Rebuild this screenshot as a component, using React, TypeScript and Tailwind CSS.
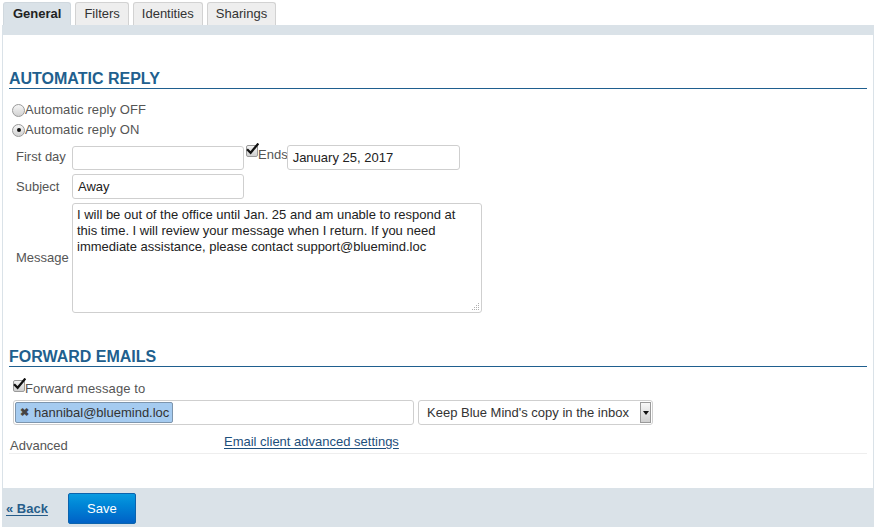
const tabs = ["General", "Filters", "Identities", "Sharings"];

function CheckBox() {
  return (
    <span className="relative inline-block h-[12px] w-[12px] shrink-0">
      <span className="absolute inset-0 rounded-[2px] border border-[#9a9a9a] bg-gradient-to-b from-[#f4f4f4] to-[#cfcfcf]" />
      <svg className="absolute left-[0px] top-[-2px]" width="13" height="13" viewBox="0 0 14 14">
        <path d="M2 7.5 L5 10.5 L12.5 1.5" fill="none" stroke="#111" strokeWidth="2.4" strokeLinecap="square" />
      </svg>
    </span>
  );
}

function Radio({ on }: { on?: boolean }) {
  return (
    <span className="flex h-[13px] w-[13px] shrink-0 items-center justify-center rounded-full border border-[#9a9a9a] bg-gradient-to-b from-[#f6f6f6] to-[#d2d2d2]">
      {on && <span className="h-[4px] w-[4px] rounded-full bg-[#111]" />}
    </span>
  );
}

function Field({ value, className }: { value?: string; className: string }) {
  return (
    <div className={`flex items-center rounded-[3px] border border-[#cfcfcf] bg-white px-[5px] text-[13px] text-[#222] ${className}`}>
      {value}
    </div>
  );
}

export default function App() {
  return (
    <div className="flex h-[527px] w-[874px] flex-col bg-white text-[13px] text-[#555]" style={{ fontFamily: '"Liberation Sans", Arial, sans-serif' }}>
      <div className="flex h-[25px] items-end gap-[4px] pl-[3px]">
        {tabs.map((t, i) => (
          <div
            key={t}
            className={
              i === 0
                ? "flex h-[23px] items-center rounded-t-[3px] border border-b-0 border-[#d0d8de] bg-[#dae2e8] px-[9px] font-bold text-[#222]"
                : "flex h-[23px] items-center rounded-t-[3px] border border-b-0 border-[#d2d2d2] bg-[#eeeeee] px-[8px] text-[#333]"
            }
          >
            {t}
          </div>
        ))}
      </div>
      <div className="ml-[2px] h-[10px] bg-[#dae2e8]" />
      <div className="ml-[2px] flex flex-1 flex-col border-x border-[#dae2e8] pl-[6px] pr-[6px]">
        <h2 className="mt-[35px] border-b border-[#1f5f8f] text-[16px] font-bold leading-[18px] text-[#215f8e]">AUTOMATIC REPLY</h2>
        <div className="mt-[11px] flex h-[20px] items-center pl-[3px]">
          <Radio />
          <span className="tracking-[0.1px]">Automatic reply OFF</span>
        </div>
        <div className="flex h-[20px] items-center pl-[3px]">
          <Radio on />
          <span className="tracking-[0.1px]">Automatic reply ON</span>
        </div>
        <div className="mt-[5px] flex items-start">
          <span className="mt-[4px] w-[63px] pl-[7px] leading-[16px]">First day</span>
          <Field className="mt-[1px] h-[24px] w-[172px]" />
          <span className="ml-[2px] flex items-start">
            <CheckBox />
            <span className="mt-[3px] leading-[14px]">Ends</span>
          </span>
          <Field value="January 25, 2017" className="-ml-[1px] h-[25px] w-[173px]" />
        </div>
        <div className="mt-[4px] flex items-center">
          <span className="w-[63px] pl-[7px]">Subject</span>
          <Field value="Away" className="h-[25px] w-[172px]" />
        </div>
        <div className="mt-[4px] flex items-center">
          <span className="w-[63px] pl-[7px]">Message</span>
          <div className="relative h-[110px] w-[410px] rounded-[3px] border border-[#cfcfcf] px-[4px] pt-[3px] text-[13px] leading-[16px] text-[#222]">
            I will be out of the office until Jan. 25 and am unable to respond at this time. I will review your message when I return. If you need immediate assistance, please contact support@bluemind.loc
            <svg className="absolute bottom-[1px] right-[1px]" width="8" height="8" viewBox="0 0 8 8">
              <g fill="#b0b0b0">
                <rect x="6" y="0" width="1" height="1" />
                <rect x="4" y="2" width="1" height="1" />
                <rect x="6" y="2" width="1" height="1" />
                <rect x="2" y="4" width="1" height="1" />
                <rect x="4" y="4" width="1" height="1" />
                <rect x="6" y="4" width="1" height="1" />
                <rect x="0" y="6" width="1" height="1" />
                <rect x="2" y="6" width="1" height="1" />
                <rect x="4" y="6" width="1" height="1" />
                <rect x="6" y="6" width="1" height="1" />
              </g>
            </svg>
          </div>
        </div>
        <h2 className="mt-[35px] border-b border-[#1f5f8f] text-[16px] font-bold leading-[18px] text-[#215f8e]">FORWARD EMAILS</h2>
        <div className="mt-[13px] flex items-start pl-[4px]">
          <CheckBox />
          <span className="mt-[1px] leading-[16px] tracking-[0.1px]">Forward message to</span>
        </div>
        <div className="mt-[3px] flex items-center pl-[4px]">
          <div className="flex h-[25px] w-[401px] items-center rounded-[3px] border border-[#cfcfcf] bg-white pl-[1px]">
            <span className="flex h-[21px] w-[158px] items-center gap-[5px] rounded-[2px] border border-[#7d95ad] bg-[#a5cbf0] pl-[4px] text-[13px] text-[#333]">
              <span className="text-[11px] font-bold text-[#444]">✖</span>
              hannibal@bluemind.loc
            </span>
          </div>
          <div className="ml-[4px] flex h-[25px] w-[235px] items-center rounded-[3px] border border-[#cfcfcf] bg-white pl-[8px] pr-[1px] text-[#333]">
            <span className="flex-1">Keep Blue Mind's copy in the inbox</span>
            <span className="flex h-[21px] w-[11px] items-center justify-center border border-[#9a9a9a] bg-gradient-to-b from-[#f8f8f8] to-[#d0d0d0]">
              <svg width="6" height="4" viewBox="0 0 6 4">
                <path d="M0 0 H6 L3 4 Z" fill="#111" />
              </svg>
            </span>
          </div>
        </div>
        <div className="mt-[8px] flex h-[21px] items-start border-b border-[#eeeeee]">
          <span className="mt-[3px] w-[215px] pl-[1px]">Advanced</span>
          <a className="-mt-[1px] text-[#1d4f7c] underline underline-offset-[2px]">Email client advanced settings</a>
        </div>
      </div>
      <div className="ml-[2px] flex h-[39px] items-center bg-[#dae2e8] pl-[4px]">
        <a className="mt-[2px] font-bold text-[#275d8a] underline underline-offset-[2px]">« Back</a>
        <button className="ml-[20px] mt-[2px] h-[31px] w-[68px] rounded-[2px] border border-[#0b63ad] bg-gradient-to-b from-[#0a9be0] to-[#0061c6] text-[13px] text-white">
          Save
        </button>
      </div>
    </div>
  );
}
